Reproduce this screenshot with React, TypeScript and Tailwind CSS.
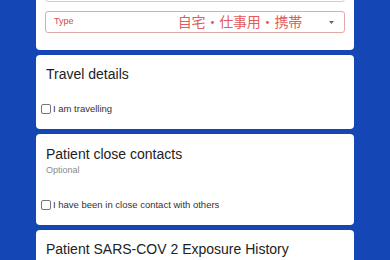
import React from 'react'

function Checkbox({ label }: { label: string }) {
  return (
    <label className="flex items-center gap-[2px] pl-[5px] text-[9.5px] text-[#333]">
      <span className="h-[10px] w-[10px] rounded-[2px] border border-[#767676] bg-white" />
      <span>{label}</span>
    </label>
  )
}

function Card({ children, className = '' }: { children: React.ReactNode; className?: string }) {
  return <section className={`rounded-[4px] bg-white ${className}`}>{children}</section>
}

export default function App() {
  return (
    <div
      className="h-[260px] w-[390px] overflow-hidden bg-[#1447b5]"
      style={{ fontFamily: '"Liberation Sans", Arial, "Noto Sans CJK JP", sans-serif' }}
    >
      <div className="mx-[36px] -mt-[30px] flex flex-col gap-[5px]">
        <Card className="px-[9px] pb-[17px] pt-[8px]">
          <div className="h-[24px] rounded-[3px] border border-[#cfcfcf]" />
          <div className="mt-[9px] flex h-[22px] items-center rounded-[3px] border border-[#e3a8a8] pl-[8px]">
            <span className="text-[9px] text-[#d44a4a]">Type</span>
            <span className="ml-auto text-[14px] leading-none tracking-[-0.2px] text-[#e25c5c]">
              自宅・仕事用・携帯
            </span>
            <svg width="5" height="3" viewBox="0 0 5 3" className="ml-[27px] mr-[10px]">
              <path d="M0 0h5L2.5 3z" fill="#666" />
            </svg>
          </div>
        </Card>

        <Card className="pb-[13px] pt-[11px]">
          <h2 className="pl-[10px] text-[14px] leading-[17px] text-[#222]">Travel details</h2>
          <div className="mt-[19px] flex h-[14px] items-center">
            <Checkbox label="I am travelling" />
          </div>
        </Card>

        <Card className="pb-[13px] pt-[12px]">
          <h2 className="pl-[10px] text-[14px] leading-[17px] text-[#222]">Patient close contacts</h2>
          <p className="mt-[2px] pl-[10px] text-[9px] leading-[11px] text-[#8a8a8a]">Optional</p>
          <div className="mt-[22px] flex h-[14px] items-center">
            <Checkbox label="I have been in close contact with others" />
          </div>
        </Card>

        <Card className="h-[60px] pt-[11px]">
          <h2 className="pl-[10px] text-[14px] leading-[17px] text-[#222]">
            Patient SARS-COV 2 Exposure History
          </h2>
        </Card>
      </div>
    </div>
  )
}
